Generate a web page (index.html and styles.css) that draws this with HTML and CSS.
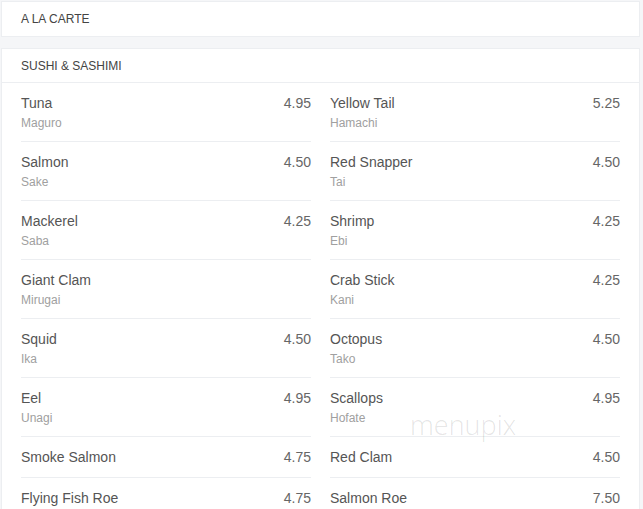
FILE: index.html
```html
<!DOCTYPE html>
<html lang="en">
<head>
  <meta charset="UTF-8" />
  <title>A La Carte</title>
  <link rel="stylesheet" href="styles.css">
</head>
<body>
  <div class="card">
    <div class="card-head">A LA CARTE</div>
  </div>

  <div class="card section">
    <div class="card-head bordered">SUSHI &amp; SASHIMI</div>
    <div class="items">
      <div class="item"><div class="info"><div class="name">Tuna</div><div class="alt">Maguro</div></div><div class="price">4.95</div></div>
      <div class="item"><div class="info"><div class="name">Yellow Tail</div><div class="alt">Hamachi</div></div><div class="price">5.25</div></div>
      <div class="item"><div class="info"><div class="name">Salmon</div><div class="alt">Sake</div></div><div class="price">4.50</div></div>
      <div class="item"><div class="info"><div class="name">Red Snapper</div><div class="alt">Tai</div></div><div class="price">4.50</div></div>
      <div class="item"><div class="info"><div class="name">Mackerel</div><div class="alt">Saba</div></div><div class="price">4.25</div></div>
      <div class="item"><div class="info"><div class="name">Shrimp</div><div class="alt">Ebi</div></div><div class="price">4.25</div></div>
      <div class="item"><div class="info"><div class="name">Giant Clam</div><div class="alt">Mirugai</div></div><div class="price"></div></div>
      <div class="item"><div class="info"><div class="name">Crab Stick</div><div class="alt">Kani</div></div><div class="price">4.25</div></div>
      <div class="item"><div class="info"><div class="name">Squid</div><div class="alt">Ika</div></div><div class="price">4.50</div></div>
      <div class="item"><div class="info"><div class="name">Octopus</div><div class="alt">Tako</div></div><div class="price">4.50</div></div>
      <div class="item"><div class="info"><div class="name">Eel</div><div class="alt">Unagi</div></div><div class="price">4.95</div></div>
      <div class="item"><div class="info"><div class="name">Scallops</div><div class="alt">Hofate</div></div><div class="price">4.95</div></div>
      <div class="item"><div class="info"><div class="name">Smoke Salmon</div></div><div class="price">4.75</div></div>
      <div class="item"><div class="info"><div class="name">Red Clam</div></div><div class="price">4.50</div></div>
      <div class="item"><div class="info"><div class="name">Flying Fish Roe</div></div><div class="price">4.75</div></div>
      <div class="item"><div class="info"><div class="name">Salmon Roe</div></div><div class="price">7.50</div></div>
    </div>
    <div class="watermark">menupix</div>
  </div>
</body>
</html>
```

FILE: styles.css
```css
body {
  margin: 0;
  padding: 1px 3px 0 1px;
  background: #f5f6f8;
  font-family: "Liberation Sans", Arial, sans-serif;
  color: #555;
}

.card {
  background: #fff;
  border: 1px solid #eceef1;
}

.section {
  margin-top: 11px;
  position: relative;
}

.card-head {
  height: 34px;
  line-height: 34px;
  padding: 0 19px;
  font-size: 12px;
  color: #444;
}

.bordered {
  height: 33px;
  line-height: 35px;
  border-bottom: 1px solid #eceef1;
}

.items {
  display: grid;
  grid-template-columns: 1fr 1fr;
  column-gap: 19px;
  padding: 0 19px;
}

.item {
  display: flex;
  justify-content: space-between;
  padding: 12px 0 11px;
  border-bottom: 1px solid #eceef1;
}

.name {
  font-size: 14px;
  line-height: 17px;
  color: #555;
}

.alt {
  font-size: 12px;
  line-height: 14px;
  margin-top: 4px;
  color: #a0a0a0;
}

.price {
  font-size: 14px;
  line-height: 17px;
  color: #666;
}

.watermark {
  position: absolute;
  left: 408px;
  top: 357px;
  font-size: 27px;
  font-weight: 300;
  color: rgba(0, 0, 0, 0.11);
  font-family: "Open Sans", sans-serif;
  pointer-events: none;
}
```
